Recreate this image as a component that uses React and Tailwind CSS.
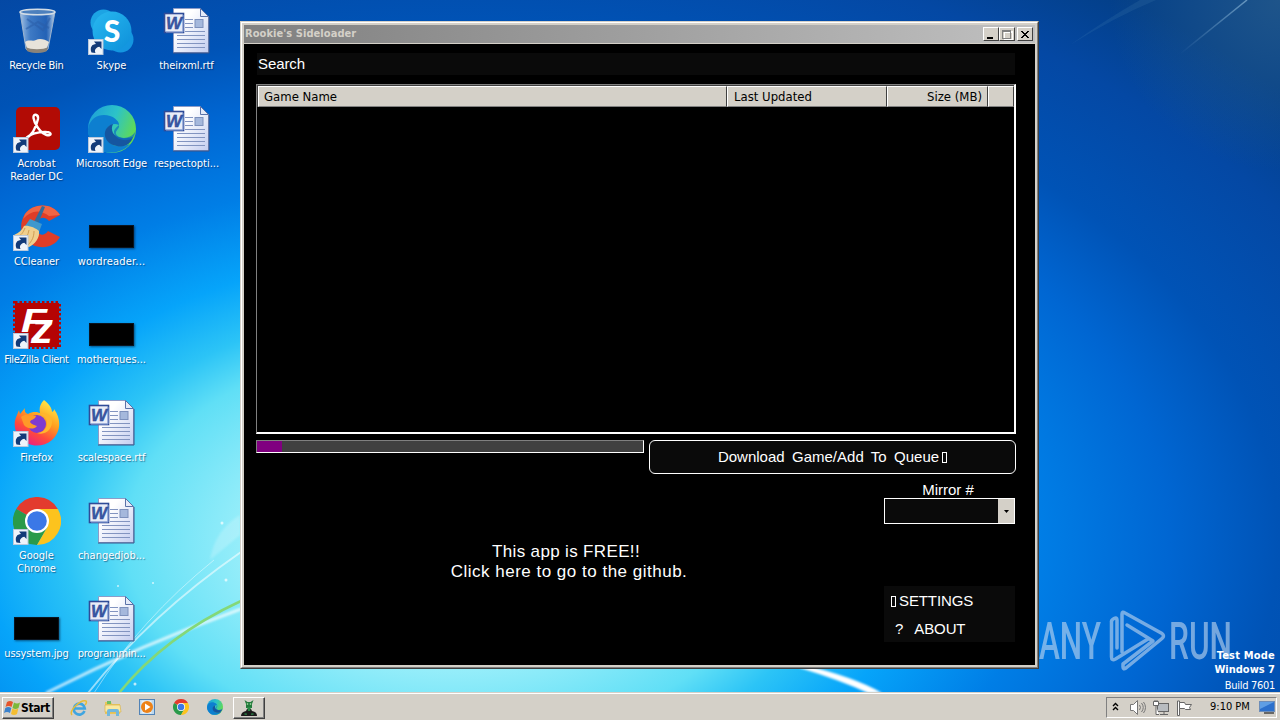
const UI_FONT = "font-['DejaVu_Sans_Condensed','DejaVu_Sans',sans-serif]";

const ShortcutArrow = () => (
  <g>
    <rect x="0.5" y="32.5" width="14.5" height="15" fill="#eef3fa" stroke="#b9c8dc" />
    <path d="M3.500 45.500c-2-5 .5-8.500 4.500-8.500L6 34.500h7.500v7.500l-2.200-2.200C8 40.500 6 43 7.500 46z" fill="#123a78" />
  </g>
);

const RecycleBin = () => (
  <svg width="48" height="48" viewBox="0 0 48 48">
    <defs>
      <linearGradient id="bin" x1="0" x2="1">
        <stop offset="0" stopColor="#c8dcf0" stopOpacity=".85" />
        <stop offset=".3" stopColor="#5e92d2" stopOpacity=".65" />
        <stop offset=".75" stopColor="#3a70bc" stopOpacity=".6" />
        <stop offset="1" stopColor="#d8e8f6" stopOpacity=".9" />
      </linearGradient>
    </defs>
    <path d="M7 5l6 37c3 4 19 4 22 0l7-37z" fill="url(#bin)" stroke="#9db4ce" />
    <path d="M12 35c4-3 8 0 11-2s9-1 13 2l-2 6c-4 3-17 3-20 0z" fill="#e8e3da" />
    <path d="M13 40c4 3 18 3 22 0l-1 4c-4 2.500-16 2.500-20 0z" fill="#8b8378" />
    <path d="M13 22l12-7 11 6M14 12l16 11 7-12" stroke="#2a5ca8" strokeOpacity=".55" strokeWidth="2" fill="none" />
    <ellipse cx="24.500" cy="5" rx="17.500" ry="2.800" fill="#4d80bd" stroke="#d3dde6" strokeWidth="1.500" />
  </svg>
);

const Skype = () => (
  <svg width="48" height="48" viewBox="0 0 48 48">
    <defs>
      <linearGradient id="sky" x1="0" y1="0" x2="1" y2="1">
        <stop offset="0" stopColor="#28b8f0" />
        <stop offset="1" stopColor="#0e90da" />
      </linearGradient>
    </defs>
    <circle cx="15.500" cy="15.500" r="13" fill="#1ca4e4" />
    <circle cx="32.500" cy="32.500" r="13" fill="#1496e0" />
    <circle cx="24" cy="24" r="19.500" fill="url(#sky)" />
    <text x="24" y="34.500" textAnchor="middle" fontSize="30" fontWeight="900" fontFamily="Lato, sans-serif" fill="#fff">S</text>
    <ShortcutArrow />
  </svg>
);

const Acrobat = () => (
  <svg width="48" height="48" viewBox="0 0 48 48">
    <rect x="3" y="2" width="44" height="43" rx="5" fill="#b20b05" />
    <path
      d="M12 34c6-3 11-11 13-20 .7-5-5-6-4.500-1 .8 6 7 15 13 17 5 1.500 6-3 0-3-8-.5-17 2-21 7"
      fill="none"
      stroke="#fff"
      strokeWidth="2.400"
      strokeLinejoin="round"
    />
    <ShortcutArrow />
  </svg>
);

const EdgeArt = () => (
  <g>
    <circle cx="24" cy="24" r="24" fill="url(#edgeTop)" />
    <path d="M0 24c2-13 14-16 22-13 6 2 9 6 9 9-7-3-14 2-13 10 1 10 11 14 24 9C34 49 16 51 7 41 2 36 0 31 0 24z" fill="#0d7fd0" />
    <path d="M17 31c-1-6 3-11 8-12-3 6 0 13 9 14 5 1 9-1 11-1-2 7-9 11-16 9-7-1-11-5-12-10z" fill="#1556a0" />
    <path d="M31 20c1 4-4 5-3 9 2 5 14 6 19-2 0 2-1 5-3 7-8 3-18 0-18-7 0-3 3-5 5-7z" fill="#0d6fc0" opacity=".7" />
  </g>
);

const EdgeDefs = () => (
  <defs>
    <linearGradient id="edgeTop" x1="0" y1=".2" x2="1" y2=".6">
      <stop offset="0" stopColor="#1e9fd8" />
      <stop offset=".5" stopColor="#2cc3c8" />
      <stop offset="1" stopColor="#66dc48" />
    </linearGradient>
  </defs>
);

const Edge = () => (
  <svg width="48" height="48" viewBox="0 0 48 48">
    <EdgeDefs />
    <EdgeArt />
    <ShortcutArrow />
  </svg>
);

const CCleaner = () => (
  <svg width="48" height="48" viewBox="0 0 48 48">
    <path d="M47 12C40 0 21-1 12 11c-8 12-3 28 10 32 10 3 20 0 25-9l-12-6c-5 7-12 3-12-4 0-8 7-13 13-6z" fill="#df3d27" />
    <path d="M47 12C40 0 21-1 12 11l-2 5c8-9 17-10 26-3z" fill="#ef6544" />
    <path d="M29 3l3 1-7 17-4-2z" fill="#2f6c9e" />
    <path d="M17 16l12 5-3 8-14-6z" fill="#3f98cd" />
    <path d="M11 23c4-1 12 2 15 5 1 7-4 13-10 16C10 44 5 38 1 32c5-2 8-5 10-9z" fill="#f0cf8d" />
    <path d="M12 25c-2 5-4 7-7 9M16 27c-1 5-3 9-6 12M21 28c0 6-2 10-6 14" stroke="#cf9d52" fill="none" />
    <ShortcutArrow />
  </svg>
);

const FileZilla = () => (
  <svg width="48" height="48" viewBox="0 0 48 48">
    <rect x="2" y="2" width="44" height="44" fill="#b50404" stroke="#b50404" strokeWidth="4" strokeDasharray="2.500 2" />
    <rect x="2" y="2" width="44" height="44" fill="#b50404" />
    <g fontWeight="700" fontStyle="italic" fontFamily="Liberation Sans, sans-serif" fill="#fff">
      <text x="8" y="31" fontSize="34" textLength="26" lengthAdjust="spacingAndGlyphs">F</text>
      <text x="18" y="42" fontSize="42" textLength="22" lengthAdjust="spacingAndGlyphs">z</text>
    </g>
    <ShortcutArrow />
  </svg>
);

const Firefox = () => (
  <svg width="48" height="48" viewBox="0 0 48 48">
    <defs>
      <linearGradient id="fx" x1=".8" y1="0" x2=".25" y2="1">
        <stop offset="0" stopColor="#fff04a" />
        <stop offset=".4" stopColor="#ffa020" />
        <stop offset=".7" stopColor="#ff4a3c" />
        <stop offset="1" stopColor="#e8188c" />
      </linearGradient>
    </defs>
    <path d="M31 1c5 4 8 8 8 12 2-1 2-2 2-3 9 12 5 25-2 31-9 8-24 7-31-1C1 33 0 24 4 16l2-5 1 4 5-6c-1 4 1 5 3 6 5-3 9-2 12-1-1-5 0-9 4-13z" fill="url(#fx)" />
    <circle cx="24" cy="25" r="9" fill="#7e3bd0" />
    <path d="M8 18c4-4 9-1 15-1-1 4-5 3-6 6 2 3 5 3 7 4-3 4-10 3-13-1z" fill="#ff9a28" />
    <path d="M24 16c5-2 10 2 10 8s-5 10-10 10c9 3 16-5 15-13-1-5-6-9-15-5z" fill="#ffb62d" />
    <ShortcutArrow />
  </svg>
);

const ChromeArt = () => (
  <g>
    <path d="M24 24L3.200 12A24 24 0 0 1 44.800 12z" fill="#e33b2e" />
    <path d="M24 24L3.200 12A24 24 0 0 0 24 48l10.400-18z" fill="#2a9a4a" />
    <path d="M24 12h20.800A24 24 0 0 1 24 48l10.400-18z" fill="#fcc31e" />
    <circle cx="24" cy="24" r="12" fill="#fff" />
    <circle cx="24" cy="24" r="9.800" fill="#3b78e7" />
  </g>
);

const Chrome = () => (
  <svg width="48" height="48" viewBox="0 0 48 48">
    <ChromeArt />
    <ShortcutArrow />
  </svg>
);

const WordDoc = () => (
  <svg width="48" height="48" viewBox="0 0 48 48">
    <defs>
      <linearGradient id="page" x1="0" y1="0" x2="1" y2="1">
        <stop offset=".3" stopColor="#fff" />
        <stop offset="1" stopColor="#c3cdf0" />
      </linearGradient>
    </defs>
    <path d="M10.500 1.500h27l8 8v36h-35z" fill="url(#page)" stroke="#8c9cc8" />
    <path d="M10 46h36V10" fill="none" stroke="#3c5488" />
    <path d="M37.500 1.500v8h8z" fill="#e4eaf8" stroke="#5b72a8" />
    <path d="M22 12.500h8M22 16.500h8M22 20.500h8M22 24.500h20M14 28.500h28M14 32.500h28M14 36.500h28M14 40.500h28" stroke="#8294c0" />
    <rect x="32" y="12.500" width="8" height="8" fill="#a5b8dc" stroke="#7c90bc" />
    <rect x="1.500" y="6.500" width="19" height="19" fill="#e9edf8" stroke="#2f4c98" strokeWidth="1.600" />
    <path d="M3 25h17V8" stroke="#8da4d8" fill="none" />
    <text x="11" y="22" textAnchor="middle" fontSize="17" fontWeight="700" fontStyle="italic" fontFamily="Liberation Sans, sans-serif" fill="#3a58a4" stroke="#27448e" strokeWidth=".4" textLength="16" lengthAdjust="spacingAndGlyphs">W</text>
  </svg>
);

const Thumbnail = () => (
  <div className="mt-[22px] mr-px h-[23px] w-[45px] border border-[#0a1420] bg-black shadow-[1px_1px_2px_rgba(0,30,60,0.6)]" />
);

const desktopItems = [
  { label: 'Recycle Bin', icon: RecycleBin, tracking: 'tracking-[-0.25px]' },
  { label: 'Acrobat Reader DC', icon: Acrobat, lines: ['Acrobat', 'Reader DC'] },
  { label: 'CCleaner', icon: CCleaner },
  { label: 'FileZilla Client', icon: FileZilla, tracking: 'tracking-[-0.32px]' },
  { label: 'Firefox', icon: Firefox },
  { label: 'Google Chrome', icon: Chrome, lines: ['Google', 'Chrome'] },
  { label: 'ussystem.jpg', icon: Thumbnail, tracking: 'tracking-[-0.1px]' },
  { label: 'Skype', icon: Skype },
  { label: 'Microsoft Edge', icon: Edge, tracking: 'tracking-[-0.15px]' },
  { label: 'wordreader...', icon: Thumbnail, tracking: 'tracking-[0.2px]' },
  { label: 'motherques...', icon: Thumbnail },
  { label: 'scalespace.rtf', icon: WordDoc, tracking: 'tracking-[-0.1px]' },
  { label: 'changedjob...', icon: WordDoc },
  { label: 'programmin...', icon: WordDoc, tracking: 'tracking-[-0.2px]' },
  { label: 'theirxml.rtf', icon: WordDoc, tracking: 'tracking-[-0.1px]' },
  { label: 'respectopti...', icon: WordDoc },
];

const Wallpaper = () => (
  <svg className="absolute inset-0" width="1280" height="720" viewBox="0 0 1280 720">
    <defs>
      <radialGradient id="sea" gradientUnits="userSpaceOnUse" cx="0" cy="0" r="1.200" gradientTransform="translate(450 540) scale(1000 620)">
        <stop offset="0" stopColor="#a8f2fc" />
        <stop offset=".17" stopColor="#98eefa" />
        <stop offset=".27" stopColor="#60dff6" />
        <stop offset=".32" stopColor="#2cc4f6" />
        <stop offset=".39" stopColor="#06a4fa" />
        <stop offset=".49" stopColor="#007ee6" />
        <stop offset=".6" stopColor="#0066d2" />
        <stop offset=".69" stopColor="#0053b6" />
        <stop offset=".82" stopColor="#0448a4" />
        <stop offset=".92" stopColor="#033f88" />
      </radialGradient>
      <radialGradient id="corner" gradientUnits="userSpaceOnUse" cx="1280" cy="0" r="170">
        <stop offset="0" stopColor="#3a6a8c" stopOpacity=".5" />
        <stop offset="1" stopColor="#3a6a8c" stopOpacity="0" />
      </radialGradient>
      <linearGradient id="ray" x1="0" y1="1" x2="1" y2="0">
        <stop offset="0" stopColor="#b4dcf4" stopOpacity="0" />
        <stop offset="1" stopColor="#b4dcf4" stopOpacity=".5" />
      </linearGradient>
      <filter id="soft"><feGaussianBlur stdDeviation="1.200" /></filter>
    </defs>
    <rect width="1280" height="720" fill="url(#sea)" />
    <rect x="1040" width="240" height="200" fill="url(#corner)" />
    <path d="M1180 54L1247 0" stroke="url(#ray)" strokeWidth="1.500" />
    <path d="M1070 45Q1105 20 1140 0h16Q1115 17 1070 45z" fill="#6fa4c8" opacity=".12" />
    <path d="M210 560L240 535V515Q215 530 210 560z" fill="#fff" opacity=".2" filter="url(#soft)" />
    <path d="M46 693Q140 645 241 609" stroke="#fff" strokeWidth="3" fill="none" opacity=".7" filter="url(#soft)" />
    <path d="M88 693Q150 615 241 552" stroke="#fff" strokeWidth="2" fill="none" opacity=".55" />
    <path d="M94 693Q140 620 214 560" stroke="#fff" strokeWidth="1" fill="none" opacity=".45" />
    <path d="M119 693Q165 636 241 601" stroke="#84d878" strokeWidth="2.500" fill="none" />
    <path d="M800 664Q855 677 882 693h-14Q840 680 800 668z" fill="#fff" filter="url(#soft)" />
    <g fill="#fff" opacity=".7">
      <circle cx="222" cy="523" r="1.500" />
      <circle cx="226" cy="580" r="1.500" />
      <circle cx="135" cy="684" r="1.500" />
      <circle cx="118" cy="586" r="1" />
      <circle cx="153" cy="583" r="1" />
    </g>
  </svg>
);

const Desktop = () => (
  <div className="absolute top-0 left-[-1px] grid auto-cols-[75px] grid-flow-col grid-rows-[repeat(7,98px)]">
    {desktopItems.map(({ label, lines = [label], icon: Icon, tracking = '' }) => (
      <div key={label} className="flex flex-col items-center pt-[7px]">
        <div className="flex h-[52px] flex-col items-center">
          <Icon />
        </div>
        <div className={`w-[74px] text-center text-[11px] leading-[13px] whitespace-nowrap text-white [text-shadow:1px_1px_1px_rgba(0,20,60,0.5)] ${tracking}`}>
          {lines.map((line) => <p key={line}>{line}</p>)}
        </div>
      </div>
    ))}
  </div>
);

const CaptionButton = ({ children, className = '' }) => (
  <button className={`flex h-[14px] w-4 items-center justify-center border border-t-white border-r-[#404040] border-b-[#404040] border-l-white bg-[#d4d0c8] ${className}`}>
    <svg width="12" height="11" viewBox="0 0 12 11" shapeRendering="crispEdges">{children}</svg>
  </button>
);

const columns = [
  { name: 'Game Name', className: 'w-[469px] pl-[5px]' },
  { name: 'Last Updated', className: 'w-[160px] pl-[6px]' },
  { name: 'Size (MB)', className: 'w-[101px] justify-end pr-[5px]' },
  { name: '', className: 'flex-1' },
];

const Tofu = () => <span className="inline-block h-[11px] w-[5px] shrink-0 border border-white" />;

const Sideloader = () => (
  <div className="absolute top-[21px] left-[240px] flex h-[648px] w-[799px] flex-col border border-t-[#d4d0c8] border-r-[#404040] border-b-[#404040] border-l-[#d4d0c8] bg-[#d4d0c8]">
    <div className="flex flex-1 flex-col border border-t-white border-r-[#808080] border-b-[#808080] border-l-white px-[2px] pt-[2px] pb-[2px]">
      {/* Title bar */}
      <div className="flex h-[18px] shrink-0 items-center bg-linear-to-r from-[#808080] to-[#c0c0c0] pr-[2px] pl-px">
        <span className="flex-1 text-[11px] font-bold tracking-[0.06px] text-[#d4d0c8]">Rookie's Sideloader</span>
        <CaptionButton><path d="M2 8h6v2H2z" fill="#000" /></CaptionButton>
        <CaptionButton className="mr-[2px]">
          <path d="M2.500 1.500h8v8h-8zM2 2.500h9" fill="none" stroke="#fff" transform="translate(.5 .5)" />
          <path d="M1.500 1.500h8v8h-8zM1 2.500h9" fill="none" stroke="#808080" />
        </CaptionButton>
        <CaptionButton><path d="M2 2h2v1h1v1h2V3h1V2h2v1H9v1H8v1H7v1h1v1h1v1h1v1H8V8H7V7H5v1H4v1H2V8h1V7h1V6h1V5H4V4H3V3H2z" fill="#000" /></CaptionButton>
      </div>

      <div className="mt-px flex flex-1 flex-col bg-black pt-[9px] pr-[19px] pl-3 font-['Liberation_Sans',sans-serif] text-white">
        <div className="mr-px ml-px flex h-[22px] shrink-0 items-center bg-[#0a0a0a] pl-px text-[15px] tracking-[-0.1px]">Search</div>

        {/* Game list */}
        <div className="mt-[9px] h-[350px] shrink-0 border-t border-r-2 border-b-2 border-l border-t-[#808080] border-r-white border-b-white border-l-[#808080]">
          <div className={`flex h-[22px] border-t border-l border-[#404040] text-[13px] text-black ${UI_FONT}`}>
            {columns.map((column, i) => (
              <div key={i} className={`flex items-center border border-t-white border-r-[#404040] border-b-[#808080] border-l-white bg-[#d4d0c8] pt-px ${column.className}`}>
                {column.name}
              </div>
            ))}
          </div>
        </div>

        <div className="mt-[6px] flex shrink-0 gap-[5px]">
          <div className="h-[13px] w-[388px] shrink-0 border border-t-[#808080] border-r-white border-b-white border-l-[#808080] bg-[#404040]">
            <div className="h-full w-[25px] bg-[#800080]" />
          </div>
          <button className="flex h-[34px] w-[367px] items-center justify-center gap-[3px] rounded-[6px] border border-white bg-[#0a0a0a] text-[15px] [word-spacing:3.2px]">
            Download Game/Add To Queue <Tofu />
          </button>
        </div>

        <div className="flex">
          <div className="w-[624px] shrink-0 pt-[68px] text-center text-[17px] leading-5">
            <p className="pr-1 tracking-[0.35px]">This app is FREE!!</p>
            <p className="pl-[2px] tracking-[0.5px]">Click here to go to the github.</p>
          </div>
          <div className="ml-1 w-[131px] pt-2">
            <p className="h-4 pr-[3px] text-center text-[15px] leading-4">Mirror #</p>
            <div className="flex h-[26px] border border-white bg-[#0a0a0a]">
              <div className="ml-auto flex w-4 items-center justify-center bg-[#d4d0c8]">
                <svg width="5" height="3" viewBox="0 0 5 3"><path d="M0 0h5L2.500 3z" fill="#000" /></svg>
              </div>
            </div>
            <div className="mt-[62px] h-14 bg-[#0a0a0a] pt-px text-[15px] tracking-[-0.1px]">
              <div className="flex h-7 items-center gap-[3px] pl-[7px]"><Tofu />SETTINGS</div>
              <div className="flex h-7 items-center gap-[11px] pl-[11px]"><span>?</span>ABOUT</div>
            </div>
          </div>
        </div>
      </div>
    </div>
  </div>
);

const Watermark = () => (
  <>
    <svg className="absolute top-[606px] left-[1038px] overflow-visible opacity-60" width="200" height="70" viewBox="0 0 200 70">
      <g fill="#c3d9f0" fontFamily="Roboto, sans-serif" fontSize="51" fontWeight="500">
        <text x="1" y="53" textLength="62" lengthAdjust="spacingAndGlyphs">ANY</text>
        <text x="131" y="53" textLength="63" lengthAdjust="spacingAndGlyphs">RUN</text>
      </g>
      <g fill="none" stroke="#c3d9f0" strokeWidth="3.500" strokeLinejoin="round" strokeLinecap="round">
        <path d="M79 42V14q0-3-3-1.500t-2.500 4V51q0 4 4 2L110 33" />
        <path d="M84 46V8q0-3 3-1l37 20.500q3 2.500 0 5L88 62q-3 2-3-1v-3l30-23-26-16" />
      </g>
    </svg>
    <div className="absolute top-[649px] right-[5px] text-right text-[11px] leading-[14px] text-white">
      <p className="font-bold tracking-[0.2px]">Test Mode</p>
      <p className="font-bold">Windows 7</p>
      <p className="mt-[2px] tracking-[-0.3px]">Build 7601</p>
    </div>
  </>
);

const IEIcon = () => (
  <svg width="18" height="18" viewBox="0 0 18 18">
    <path d="M14.500 12A5.500 5.500 0 1 1 14.800 9.500H5" fill="none" stroke="#3fa5e0" strokeWidth="2.600" />
    <path d="M2 16C-2 12 11 0 16 2c1 1 0 3-1 4" fill="none" stroke="#e8bc35" strokeWidth="1.500" />
  </svg>
);

const ExplorerIcon = () => (
  <svg width="18" height="18" viewBox="0 0 18 18">
    <path d="M1 3h6l1 2h8v10H1z" fill="#e9c65c" />
    <path d="M3 2h4v3H3z" fill="#6fbf62" />
    <path d="M1 6h15l1 7H1z" fill="#fae9a0" stroke="#d8b350" strokeWidth=".7" />
    <path d="M3 17v-5q0-2 2-2h8q2 0 2 2v5h-3v-4H6v4z" fill="#72b8dc" />
  </svg>
);

const MediaIcon = () => (
  <svg width="16" height="16" viewBox="0 0 16 16">
    <rect x=".5" y=".5" width="15" height="15" fill="#bcd8ee" stroke="#5283b6" />
    <rect x="2.500" y="1.500" width="10" height="13" fill="#e6f0f8" />
    <circle cx="8" cy="8" r="6" fill="#ed8218" />
    <path d="M6 4.500v7l5.500-3.500z" fill="#fff" />
  </svg>
);

const AndroidIcon = () => (
  <svg width="18" height="17" viewBox="0 0 18 17">
    <path d="M4.500 1l3 2h3l3-2-1.500 4v4h-6V5z" fill="#247a3c" />
    <circle cx="7.500" cy="5" r=".8" fill="#b4f0b4" />
    <circle cx="10.500" cy="5" r=".8" fill="#b4f0b4" />
    <path d="M1 17q0-4 5-5l1-2h4l1 2q5 1 5 5z" fill="#1b1b1b" />
    <path d="M7 8h4l-1 4H8z" fill="#2a8a46" />
    <path d="M4.500 14l2.500.5V16H4.500zM11 14.500l2.500-.5v2H11z" fill="#256c3a" />
  </svg>
);

const WindowsFlag = () => (
  <svg width="17" height="16" viewBox="0 0 17 16">
    <path d="M3 2q3-2 6 0L7.500 7q-3-2-6 0z" fill="#e5552c" />
    <path d="M10 2.500q3 2 6 0L14.500 8q-3 2-6 0z" fill="#7cb83a" />
    <path d="M1.300 8q3-2 6 0L6 13q-3-2-6 0z" fill="#3b82cc" />
    <path d="M8.300 8.500q3 2 6 0L13 14q-3 2-6 0z" fill="#f4bd30" />
  </svg>
);

const Taskbar = () => (
  <div className="relative flex h-7 shrink-0 items-center border-t border-[#d4d0c8] bg-[#d4d0c8] pr-[3px] pl-[2px] shadow-[inset_0_1px_0_#fff]">
    <button className="mt-[2px] flex h-[22px] w-[52px] items-center border border-t-white border-r-[#404040] border-b-[#404040] border-l-white pl-px text-[12px] font-bold tracking-[-0.4px] shadow-[inset_-1px_-1px_0_#808080]">
      <WindowsFlag />
      Start
    </button>
    <div className="mt-[2px] ml-[8px] flex">
      <div className="flex w-[34px] justify-center"><IEIcon /></div>
      <div className="flex w-[34px] justify-center"><ExplorerIcon /></div>
      <div className="flex w-[34px] justify-center"><MediaIcon /></div>
      <div className="flex w-[34px] justify-center"><svg width="16" height="16" viewBox="0 0 48 48"><ChromeArt /></svg></div>
      <div className="flex w-[34px] justify-center"><svg width="16" height="16" viewBox="0 0 48 48"><EdgeArt /></svg></div>
    </div>
    <button className="mt-[2px] ml-px flex h-[22px] w-8 items-center justify-center border border-t-white border-r-[#404040] border-b-[#404040] border-l-white shadow-[inset_-1px_-1px_0_#808080]">
      <AndroidIcon />
    </button>
    <div className="mt-[2px] ml-auto flex h-[21px] w-[171px] items-center border border-t-[#808080] border-r-white border-b-white border-l-[#808080] pl-[5px] text-[11px]">
      <svg className="mb-[3px]" width="7" height="9" viewBox="0 0 7 9" fill="none" stroke="#000" strokeWidth="1.400"><path d="M1 4l2.500-2.500L6 4M1 8l2.500-2.500L6 8" /></svg>
      <svg className="ml-[10px]" width="18" height="17" viewBox="0 0 18 17" fill="none" stroke="#777">
        <path d="M1.500 5.500h3l4-4v14l-4-4h-3z" fill="#fff" />
        <path d="M10.500 6q2 2.500 0 5M12.500 4q3.500 4.500 0 9M14.500 3q4 5.500 0 11" />
      </svg>
      <svg className="ml-[6px]" width="16" height="16" viewBox="0 0 16 16" fill="none" stroke="#666">
        <rect x="4.500" y="3.500" width="11" height="8" fill="#b8bcc0" />
        <path d="M7 14.500h8M11 12v3" />
        <path d="M.5 1.500h5v4h-5zM2 0v2M4 0v2M3 6v8.500h3" fill="#fff" />
      </svg>
      <svg className="ml-[7px]" width="17" height="16" viewBox="0 0 17 16" stroke="#666">
        <path d="M1.500 1v14.500h2V1z" fill="#fff" />
        <path d="M3.500 2.500h5l1 2h6l-2 3 1 2h-5l-1-1h-5z" fill="#fff" />
      </svg>
      <span className="ml-[17px] whitespace-nowrap">9:10 PM</span>
      <svg className="ml-auto mr-px" width="16" height="13" viewBox="0 0 16 13">
        <rect x=".5" y=".5" width="15" height="10" fill="#2c70cc" stroke="#6d8db8" />
        <path d="M1 1h14L1 8z" fill="#5f9ee4" />
        <path d="M5 12h10" stroke="#444" strokeWidth="1.500" />
      </svg>
    </div>
  </div>
);

const App = () => (
  <div className={`relative flex h-[720px] w-[1280px] flex-col overflow-hidden ${UI_FONT}`}>
    <Wallpaper />
    <div className="relative flex-1">
      <Desktop />
      <Sideloader />
      <Watermark />
    </div>
    <Taskbar />
  </div>
);

export default App;
